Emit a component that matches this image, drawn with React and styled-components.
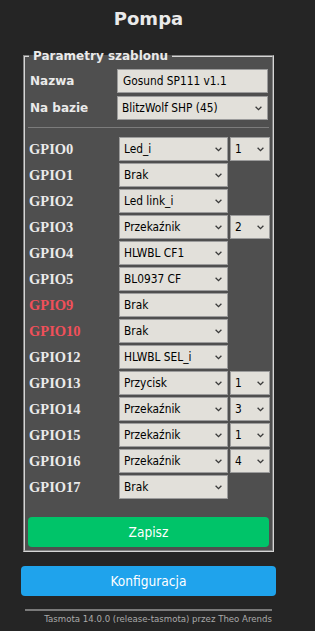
import React from "react";
import styled, { createGlobalStyle } from "styled-components";

const gpios = [
  { pin: "GPIO0", fn: "Led_i", idx: "1" },
  { pin: "GPIO1", fn: "Brak" },
  { pin: "GPIO2", fn: "Led link_i" },
  { pin: "GPIO3", fn: "Przekaźnik", idx: "2" },
  { pin: "GPIO4", fn: "HLWBL CF1" },
  { pin: "GPIO5", fn: "BL0937 CF" },
  { pin: "GPIO9", fn: "Brak", warn: true },
  { pin: "GPIO10", fn: "Brak", warn: true },
  { pin: "GPIO12", fn: "HLWBL SEL_i" },
  { pin: "GPIO13", fn: "Przycisk", idx: "1" },
  { pin: "GPIO14", fn: "Przekaźnik", idx: "3" },
  { pin: "GPIO15", fn: "Przekaźnik", idx: "1" },
  { pin: "GPIO16", fn: "Przekaźnik", idx: "4" },
  { pin: "GPIO17", fn: "Brak" },
];

const Chevron = () => (
  <StyledChevron width="7" height="5" viewBox="0 0 7 5">
    <path d="M0.6 0.8 L3.5 3.7 L6.4 0.8" fill="none" stroke="#3a3a3a" strokeWidth="1.3" />
  </StyledChevron>
);

const Select = ({ value }) => (
  <StyledSelectWrap>
    <StyledSelect defaultValue={value}>
      <option>{value}</option>
    </StyledSelect>
    <Chevron />
  </StyledSelectWrap>
);

export default function App() {
  return (
    <>
      <GlobalStyles />
      <StyledPage>
        <StyledTitle>Pompa</StyledTitle>
        <StyledFieldset>
          <StyledLegend>Parametry szablonu</StyledLegend>
          <StyledFieldRow>
            <StyledLabel>Nazwa</StyledLabel>
            <StyledInput defaultValue="Gosund SP111 v1.1" />
          </StyledFieldRow>
          <StyledFieldRow>
            <StyledLabel>Na bazie</StyledLabel>
            <Select value="BlitzWolf SHP (45)" />
          </StyledFieldRow>
          <StyledDivider />
          <StyledGpioList>
            {gpios.map(g => (
              <StyledGpioRow key={g.pin}>
                <StyledPin $warn={g.warn}>{g.pin}</StyledPin>
                <Select value={g.fn} />
                {g.idx && <Select value={g.idx} />}
              </StyledGpioRow>
            ))}
          </StyledGpioList>
          <StyledButton $bg="#00c469">Zapisz</StyledButton>
        </StyledFieldset>
        <StyledButton $bg="#1fa3ec" $wide>Konfiguracja</StyledButton>
        <StyledRule />
        <StyledFooter>Tasmota 14.0.0 (release-tasmota) przez Theo Arends</StyledFooter>
      </StyledPage>
    </>
  );
}

const GlobalStyles = createGlobalStyle`
  html, body {
    margin: 0;
    background: #252525;
  }
  body {
    color: #eaeaea;
    font-family: "DejaVu Sans", Verdana, sans-serif;
  }
`;

const StyledPage = styled.div`
  width: 255px;
  padding: 5px 0 0 21px;
`;

const StyledTitle = styled.h2`
  margin: 0;
  font-size: 18px;
  line-height: 28px;
  font-weight: bold;
  text-align: center;
`;

const StyledFieldset = styled.fieldset`
  margin: 16px 2px 0;
  padding: 6px 3px 3px;
  background: #4f4f4f;
  border: 2px groove #d6d6d6;
  min-width: 0;
`;

const StyledLegend = styled.legend`
  padding: 0 4px;
  margin-left: 1px;
  font-size: 12px;
  line-height: 14px;
  font-weight: bold;
`;

const StyledFieldRow = styled.div`
  display: grid;
  grid-template-columns: 89px 151px;
  align-items: center;
  height: 24px;
  margin-bottom: 3px;
`;

const StyledLabel = styled.span`
  padding-left: 2px;
  font-size: 12px;
  font-weight: bold;
`;

const controlFont = `
  font-family: "DejaVu Sans Condensed", "DejaVu Sans", sans-serif;
  font-stretch: condensed;
  font-size: 11.8px;
  color: #000;
`;

const StyledInput = styled.input`
  box-sizing: border-box;
  width: 151px;
  height: 24px;
  padding: 0 5px;
  border: 1px solid #9c9c9c;
  background: #e2e0da;
  outline: none;
  ${controlFont}
`;

const StyledSelectWrap = styled.div`
  position: relative;
  height: 24px;
`;

const StyledSelect = styled.select`
  appearance: none;
  box-sizing: border-box;
  width: 100%;
  height: 24px;
  margin: 0;
  padding: 0 14px 0 4px;
  border: 1px solid #9c9c9c;
  border-radius: 0;
  background: #e2e0da;
  outline: none;
  ${controlFont}
`;

const StyledChevron = styled.svg`
  position: absolute;
  right: 6px;
  top: 10px;
  pointer-events: none;
`;

const StyledDivider = styled.div`
  height: 1px;
  margin: 7px 0 9px;
  background: #7c7c7c;
`;

const StyledGpioList = styled.div`
  display: flex;
  flex-direction: column;
  gap: 2px;
`;

const StyledGpioRow = styled.div`
  display: grid;
  grid-template-columns: 89px 109px 40px;
  column-gap: 2px;
  align-items: center;
  height: 24px;
`;

const StyledPin = styled.span`
  padding-left: 1px;
  font-family: "Liberation Serif", "Times New Roman", serif;
  font-size: 14.5px;
  font-weight: bold;
  color: ${props => (props.$warn ? "#f0505a" : "#eaeaea")};
`;

const StyledButton = styled.button`
  display: block;
  box-sizing: border-box;
  width: 100%;
  height: 30px;
  margin-top: ${props => (props.$wide ? "14px" : "18px")};
  border: 0;
  border-radius: 4px;
  background: ${props => props.$bg};
  color: #fff;
  font-family: "DejaVu Sans Condensed", "DejaVu Sans", sans-serif;
  font-stretch: condensed;
  font-size: 13.6px;
`;

const StyledRule = styled.div`
  height: 2px;
  margin: 13px 4px 0;
  background: #7a7a7a;
`;

const StyledFooter = styled.div`
  padding: 2px 4px 0 0;
  text-align: right;
  font-size: 8.6px;
  line-height: 13px;
  color: #aaa;
`;
